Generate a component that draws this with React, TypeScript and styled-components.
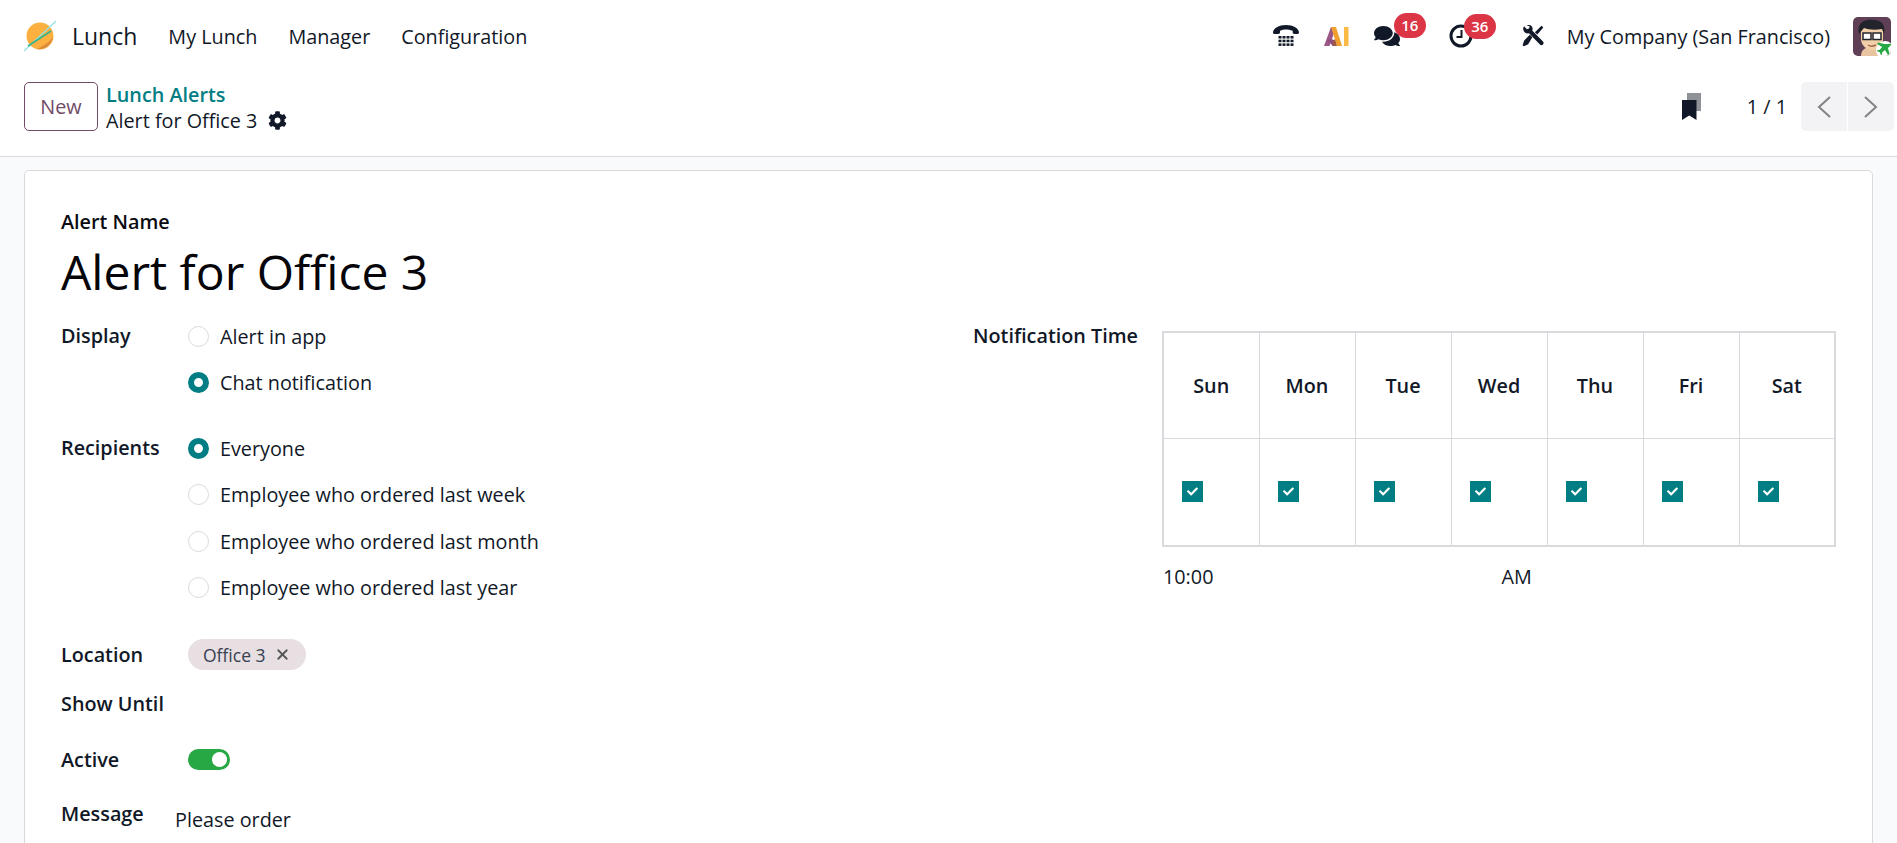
import styled, { createGlobalStyle } from "styled-components";
import { FaCog, FaComments, FaCheck } from "react-icons/fa";
import { X } from "lucide-react";

const GlobalStyle = createGlobalStyle`
  html, body {
    margin: 0;
    padding: 0;
    height: 100%;
    overflow: hidden;
  }
  body {
    font-family: "Open Sans", "Noto Sans", sans-serif;
    font-size: 19.8px;
    color: #111827;
    background: #fff;
  }
  * { box-sizing: border-box; }
`;

const Screen = styled.div`
  width: 100vw;
  height: 100vh;
  display: flex;
  flex-direction: column;
  overflow: hidden;
`;

const NavBar = styled.header`
  height: 72px;
  flex: none;
  display: flex;
  align-items: center;
  padding: 0 6px 0 23px;
`;

const AppName = styled.span`
  font-size: 23px;
  margin-left: 15px;
  margin-right: 31px;
`;

const NavItem = styled.span`
  margin-right: 31px;
`;

const NavRight = styled.div`
  margin-left: auto;
  display: flex;
  align-items: center;
`;

const IconSlot = styled.div<{ $w: number; $ml?: number }>`
  position: relative;
  width: ${(p) => p.$w}px;
  margin-left: ${(p) => p.$ml ?? 0}px;
  display: flex;
  align-items: center;
  justify-content: center;
  color: #111827;
`;

const Badge = styled.span<{ $left: number }>`
  position: absolute;
  top: -10px;
  left: ${(p) => p.$left}px;
  height: 25px;
  min-width: 32px;
  padding: 0 6px;
  border-radius: 13px;
  background: #dc3545;
  color: #fff;
  font-size: 15px;
  font-weight: 600;
  line-height: 25px;
  text-align: center;
`;

const CompanyName = styled.span`
  margin-left: 23px;
  margin-right: 23px;
`;

const Avatar = styled.div`
  position: relative;
  width: 38px;
  height: 39px;
  border-radius: 5px;
  overflow: hidden;
`;

const ControlBar = styled.div`
  height: 85px;
  flex: none;
  display: flex;
  align-items: flex-start;
  padding: 10px 3px 0 24px;
  border-bottom: 1px solid #d8dadd;
`;

const NewButton = styled.button`
  width: 74px;
  height: 49px;
  border: 1px solid #714b67;
  border-radius: 5px;
  background: #fff;
  color: #714b67;
  font: inherit;
  font-weight: 500;
  padding: 0;
`;

const Breadcrumbs = styled.div`
  margin-left: 8px;
  display: flex;
  flex-direction: column;
`;

const CrumbLink = styled.a`
  color: #017e84;
  font-weight: 600;
  line-height: 26px;
`;

const CrumbCurrent = styled.div`
  display: flex;
  align-items: center;
  gap: 11px;
  line-height: 25px;
  svg { color: #111827; }
`;

const PagerArea = styled.div`
  margin-left: auto;
  display: flex;
  align-items: center;
  height: 49px;
`;

const PagerCount = styled.span`
  margin-left: 46px;
  margin-right: 14px;
`;

const PagerButtons = styled.div`
  display: flex;
  width: 93px;
  height: 49px;
  border-radius: 5px;
  overflow: hidden;
  gap: 1px;
`;

const PagerButton = styled.div`
  flex: 1;
  background: #f3f3f5;
  display: flex;
  align-items: center;
  justify-content: center;
`;

const Page = styled.main`
  flex: 1;
  min-height: 0;
  background: #f9fafb;
  padding: 13px 24px 0;
  overflow: hidden;
`;

const Card = styled.section`
  background: #fff;
  border: 1px solid #d8dadd;
  border-radius: 5px;
  padding: 38px 36px 40px;
  min-height: 800px;
`;

const NameLabel = styled.div`
  font-weight: 600;
  line-height: 26px;
  color: #0b0b12;
`;

const NameTitle = styled.h1`
  margin: 7px 0 0;
  font-size: 48px;
  font-weight: 400;
  line-height: 60px;
  color: #05050a;
`;

const Columns = styled.div`
  display: grid;
  grid-template-columns: 912px 1fr;
  margin-top: 11px;
`;

const FieldRow = styled.div<{ $mt?: number }>`
  display: flex;
  margin-top: ${(p) => p.$mt ?? 0}px;
`;

const FieldLabel = styled.div<{ $h: number; $w?: number }>`
  width: ${(p) => p.$w ?? 127}px;
  flex: none;
  font-weight: 600;
  line-height: ${(p) => p.$h}px;
`;

const RadioGroup = styled.div`
  display: flex;
  flex-direction: column;
`;

const RadioRow = styled.label`
  display: flex;
  align-items: center;
  gap: 11px;
  height: 46.5px;
`;

const RadioDot = styled.span<{ $on?: boolean }>`
  width: 21px;
  height: 21px;
  flex: none;
  border-radius: 50%;
  background: #fff;
  border: ${(p) => (p.$on ? "6px solid #017e84" : "1px solid #d8dadd")};
`;

const Chip = styled.span`
  height: 31px;
  display: inline-flex;
  align-items: center;
  gap: 8px;
  padding: 0 15px;
  border-radius: 16px;
  background: #e7dfe1;
  color: #374151;
  font-size: 17.5px;
  font-weight: 500;
`;

const Toggle = styled.span`
  width: 42px;
  height: 21px;
  margin-top: 4px;
  border-radius: 11px;
  background: #28a745;
  display: flex;
  align-items: center;
  justify-content: flex-end;
  padding-right: 3px;
`;

const ToggleKnob = styled.span`
  width: 15px;
  height: 15px;
  border-radius: 50%;
  background: #fff;
`;

const MessageText = styled.div`
  margin-left: -13px;
  padding-top: 6px;
  line-height: 30px;
`;

const ScheduleBlock = styled.div`
  margin-top: 18px;
`;

const DayTable = styled.table`
  width: 674px;
  table-layout: fixed;
  border-collapse: collapse;
  border: 2px solid #d8dadd;
`;

const HeadCell = styled.th`
  height: 106px;
  border: 1px solid #d8dadd;
  font-weight: 600;
  padding: 0;
`;

const BodyCell = styled.td`
  height: 108px;
  border: 1px solid #d8dadd;
  padding: 0 0 0 18px;
`;

const CheckBox = styled.span`
  width: 21px;
  height: 21px;
  background: #017e84;
  color: #fff;
  display: flex;
  align-items: center;
  justify-content: center;
`;

const TimeRow = styled.div`
  display: flex;
  margin-top: 16px;
  line-height: 28px;
`;

const TimeValue = styled.span<{ $pl?: number }>`
  flex: 1;
  padding-left: ${(p) => p.$pl ?? 1}px;
`;

const DeskPhoneIcon = () => (
  <svg width="28" height="24" viewBox="0 0 28 24">
    <path d="M1 8.5C1 4.5 7 1 14 1s13 3.500 13 7.500c0 1-1 1.500-2.200 1.500h-2.300c-1.200 0-1.800-.7-1.800-1.700V6.800C18 5.800 16 5.500 14 5.500s-4 .3-6 1.300v1.500C8 9.300 7.400 10 6.200 10H3.200C2 10 1 9.500 1 8.500z" fill="#111827" />
    <g fill="#111827">
      {[12, 15.700, 19.400].map((y) =>
        [6.500, 10.500, 14.500, 18.500].map((x) => <rect key={`${x}-${y}`} x={x} y={y} width="3" height="2.500" />)
      )}
    </g>
  </svg>
);

const AiIcon = () => (
  <svg width="26" height="20" viewBox="0 0 26 20">
    <path d="M0 20L7 1h5L8 13 5.500 20z" fill="#9c5789" />
    <path d="M3 15c2-2 5-2.500 7-1l2 6H8.500C7 17.500 5 16 3 15z" fill="#8f4e7e" />
    <path d="M7 1h5l6 19h-5z" fill="#f0a030" />
    <path d="M11 13l2 7h-3l-1.500-4z" fill="#a15a3c" />
    <rect x="20" y="1" width="4.500" height="19" fill="#fbb945" />
  </svg>
);

const ClockIcon = () => (
  <svg width="24" height="24" viewBox="0 0 24 24">
    <circle cx="12" cy="12" r="10" fill="none" stroke="#111827" strokeWidth="3" />
    <path d="M12.500 6v7H7.500" fill="none" stroke="#111827" strokeWidth="2" />
  </svg>
);

const ToolsIcon = () => (
  <svg width="22" height="22" viewBox="0 0 22 22">
    <path d="M2 6.500C.8 4.500 1 2.700 2 1.200l3 3 2-.7.700-2-3-1.200c2-.8 4-.4 5 1 1 1.200 1.200 3 .5 4.300L21 16.500c.8.900.8 2 0 3-.9.900-2.300.9-3.100 0L7 8.300C5 8.800 3.200 8.200 2 6.500z" fill="#111827" />
    <path d="M19.500 .8l1.800 1.800-6 7-2.400-2.400zM10.300 12.300l-2.500-2.500-5.600 5.800-1.600 4.700 1 1 4.600-2z" fill="#111827" />
  </svg>
);

const BookmarksIcon = () => (
  <svg width="19" height="27" viewBox="0 0 19 27">
    <path d="M5 0h14v18H5z" fill="#8f9296" />
    <path d="M0 7h14.500v20l-7.250-4.500L0 27z" fill="#111827" />
  </svg>
);

const PagerChevron = ({ d }: { d: string }) => (
  <svg width="14" height="22" viewBox="0 0 14 22">
    <path d={d} fill="none" stroke="#808285" strokeWidth="2" />
  </svg>
);

const LogoIcon = () => (
  <svg width="34" height="34" viewBox="0 0 34 34">
    <circle cx="17" cy="17" r="13.500" fill="#fbb040" />
    <path d="M14 30.200c8 1 15-5 16-12.500-3 5-8 8-16 12.500z" fill="#dd8a3a" />
    <path d="M1 32L33 2" stroke="#8fe3e6" strokeWidth="1.200" />
    <path d="M5 27L28 12" stroke="#34b38a" strokeWidth="1.600" />
  </svg>
);

const AvatarArt = () => (
  <svg width="38" height="39" viewBox="0 0 38 39">
    <rect width="38" height="39" fill="#5f3f55" />
    <path d="M8 39c0-6 4-9 11-9s12 3 12 9z" fill="#e8c5a0" />
    <path d="M8 14c0-7 22-7 22 0v8c0 6-5 11-11 11S8 28 8 22z" fill="#f2cfa8" />
    <path d="M6 17C3 6 12 2 20 3c8 0 13 4 11 14l-2-5c-6 1-13 1-18-1z" fill="#23242b" />
    <rect x="10" y="16" width="8" height="6.500" fill="#fff" stroke="#23242b" strokeWidth="1.500" />
    <rect x="20" y="16" width="8" height="6.500" fill="#fff" stroke="#23242b" strokeWidth="1.500" />
    <path d="M15 28c2 1.500 5 1.500 8 0" stroke="#a86a4e" strokeWidth="1.500" fill="none" />
    <circle cx="32" cy="33" r="9" fill="#fff" />
    <path d="M36 27c1-1 2.500-.5 2 1l-3 3 1.500 6-1.500 1-3-5-3 2.500v2l-1 .8-1.200-3-3-1.200.8-1h2l2.500-3-5-3 1-1.500 6 1.500z" fill="#28a745" />
  </svg>
);

const days = ["Sun", "Mon", "Tue", "Wed", "Thu", "Fri", "Sat"];

export default function App() {
  return (
    <Screen>
      <GlobalStyle />
      <NavBar>
        <LogoIcon />
        <AppName>Lunch</AppName>
        <NavItem>My Lunch</NavItem>
        <NavItem>Manager</NavItem>
        <NavItem>Configuration</NavItem>
        <NavRight>
          <IconSlot $w={28}>
            <DeskPhoneIcon />
          </IconSlot>
          <IconSlot $w={26} $ml={24}>
            <AiIcon />
          </IconSlot>
          <IconSlot $w={26} $ml={24}>
            <FaComments size={26} />
            <Badge $left={20}>16</Badge>
          </IconSlot>
          <IconSlot $w={24} $ml={49}>
            <ClockIcon />
            <Badge $left={15}>36</Badge>
          </IconSlot>
          <IconSlot $w={22} $ml={49}>
            <ToolsIcon />
          </IconSlot>
          <CompanyName>My Company (San Francisco)</CompanyName>
          <Avatar>
            <AvatarArt />
          </Avatar>
        </NavRight>
      </NavBar>
      <ControlBar>
        <NewButton>New</NewButton>
        <Breadcrumbs>
          <CrumbLink>Lunch Alerts</CrumbLink>
          <CrumbCurrent>
            Alert for Office 3
            <FaCog size={19} />
          </CrumbCurrent>
        </Breadcrumbs>
        <PagerArea>
          <BookmarksIcon />
          <PagerCount>1 / 1</PagerCount>
          <PagerButtons>
            <PagerButton>
              <PagerChevron d="M13 1L2 11l11 10" />
            </PagerButton>
            <PagerButton>
              <PagerChevron d="M1 1l11 10L1 21" />
            </PagerButton>
          </PagerButtons>
        </PagerArea>
      </ControlBar>
      <Page>
        <Card>
          <NameLabel>Alert Name</NameLabel>
          <NameTitle>Alert for Office 3</NameTitle>
          <Columns>
            <div>
              <FieldRow>
                <FieldLabel $h={46}>Display</FieldLabel>
                <RadioGroup>
                  <RadioRow>
                    <RadioDot />
                    Alert in app
                  </RadioRow>
                  <RadioRow>
                    <RadioDot $on />
                    Chat notification
                  </RadioRow>
                </RadioGroup>
              </FieldRow>
              <FieldRow $mt={19}>
                <FieldLabel $h={46}>Recipients</FieldLabel>
                <RadioGroup>
                  <RadioRow>
                    <RadioDot $on />
                    Everyone
                  </RadioRow>
                  <RadioRow>
                    <RadioDot />
                    Employee who ordered last week
                  </RadioRow>
                  <RadioRow>
                    <RadioDot />
                    Employee who ordered last month
                  </RadioRow>
                  <RadioRow>
                    <RadioDot />
                    Employee who ordered last year
                  </RadioRow>
                </RadioGroup>
              </FieldRow>
              <FieldRow $mt={28}>
                <FieldLabel $h={31}>Location</FieldLabel>
                <Chip>
                  Office 3
                  <X size={17} strokeWidth={2.5} color="#555" />
                </Chip>
              </FieldRow>
              <FieldRow $mt={19}>
                <FieldLabel $h={30}>Show Until</FieldLabel>
              </FieldRow>
              <FieldRow $mt={26}>
                <FieldLabel $h={30}>Active</FieldLabel>
                <Toggle>
                  <ToggleKnob />
                </Toggle>
              </FieldRow>
              <FieldRow $mt={24}>
                <FieldLabel $h={30}>Message</FieldLabel>
                <MessageText>Please order</MessageText>
              </FieldRow>
            </div>
            <div>
              <FieldRow>
                <FieldLabel $h={46} $w={189}>
                  Notification Time
                </FieldLabel>
                <ScheduleBlock>
                  <DayTable>
                    <thead>
                      <tr>
                        {days.map((d) => (
                          <HeadCell key={d}>{d}</HeadCell>
                        ))}
                      </tr>
                    </thead>
                    <tbody>
                      <tr>
                        {days.map((d) => (
                          <BodyCell key={d}>
                            <CheckBox>
                              <FaCheck size={11} />
                            </CheckBox>
                          </BodyCell>
                        ))}
                      </tr>
                    </tbody>
                  </DayTable>
                  <TimeRow>
                    <TimeValue>10:00</TimeValue>
                    <TimeValue $pl={4}>AM</TimeValue>
                  </TimeRow>
                </ScheduleBlock>
              </FieldRow>
            </div>
          </Columns>
        </Card>
      </Page>
    </Screen>
  );
}
